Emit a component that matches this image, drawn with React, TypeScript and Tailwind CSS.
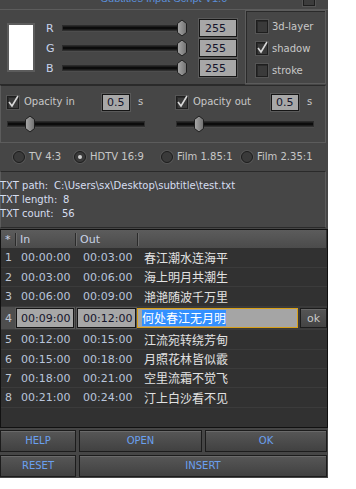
import React from "react";

const Knob = ({ left }: { left: number }) => (
  <svg
    width="10"
    height="17"
    viewBox="0 0 10 17"
    className="absolute top-1/2 -translate-y-1/2 -translate-x-1/2"
    style={{ left }}
  >
    <defs>
      <linearGradient id="kg" x1="0" x2="1" y1="0" y2="0">
        <stop offset="0" stopColor="#a8a8a8" />
        <stop offset="1" stopColor="#707070" />
      </linearGradient>
    </defs>
    <polygon points="5,0.5 9.5,4 9.5,13 5,16.5 0.5,13 0.5,4" fill="url(#kg)" stroke="#1e1e1e" strokeWidth="1" />
  </svg>
);

const Slider = ({ width, frac, cls }: { width: number; frac: number; cls: string }) => (
  <div className={`relative h-[17px] ${cls}`}>
    <div className="absolute left-0 right-0 top-1/2 -translate-y-1/2 h-[5px] bg-[#0c0c0c] border border-[#2e2e2e] shadow-[0_1px_0_#555]" />
    <Knob left={4 + frac * (width - 8)} />
  </div>
);

const Check = ({ on }: { on?: boolean }) => (
  <div className="w-[12px] h-[13px] shrink-0 bg-[#3a3a3a] border border-[#1e1e1e] shadow-[inset_1px_1px_0_#2a2a2a,0_0_0_1px_#555] relative">
    {on && (
      <svg width="12" height="13" viewBox="0 0 12 13" className="absolute -left-[1px] -top-[2px]">
        <path d="M2 7 L5 11 L11 1" fill="none" stroke="#d8d8d8" strokeWidth="1.6" />
      </svg>
    )}
  </div>
);

const Radio = ({ on }: { on?: boolean }) => (
  <div className="w-[12px] h-[12px] shrink-0 rounded-full bg-[#3a3a3a] border border-[#1c1c1c] shadow-[0_0_0_1px_#555] flex items-center justify-center">
    {on && <div className="w-[4px] h-[4px] rounded-full bg-[#cfcfcf]" />}
  </div>
);

const NumBox = ({ v, cls }: { v: string; cls: string }) => (
  <div className={`bg-[#a7a7a7] border border-[#151515] shadow-[0_0_0_1px_#5a5a5a] text-[#14142a] flex items-center ${cls}`}>
    {v}
  </div>
);

const rows: [string, string, string, string, number][] = [
  ["1", "00:00:00", "00:03:00", "春江潮水连海平", 20],
  ["2", "00:03:00", "00:06:00", "海上明月共潮生", 19],
  ["3", "00:06:00", "00:09:00", "滟滟随波千万里", 20],
  ["4", "00:09:00", "00:12:00", "何处春江无月明", 23],
  ["5", "00:12:00", "00:15:00", "江流宛转绕芳甸", 20],
  ["6", "00:15:00", "00:18:00", "月照花林皆似霰", 19],
  ["7", "00:18:00", "00:21:00", "空里流霜不觉飞", 19],
  ["8", "00:21:00", "00:24:00", "汀上白沙看不见", 20],
];

const Btn = ({ label, cls }: { label: string; cls: string }) => (
  <div
    className={`h-[22px] flex items-center justify-center bg-gradient-to-b from-[#575757] to-[#414141] border border-[#1c1c1c] shadow-[inset_0_1px_0_#6a6a6a] text-[#6aa0f0] text-[10px] ${cls}`}
  >
    {label}
  </div>
);

const Sep = () => (
  <div className="w-[2px] h-[13px] border-l border-[#2a2a2a] border-r border-r-[#6a6a6a] shrink-0" />
);

export default function App() {
  return (
    <div className="w-[328px] h-[478px] bg-[#464646] font-['DejaVu_Sans',sans-serif] text-[10px] leading-none text-[#cdd2dc] flex flex-col overflow-hidden select-none">
      {/* title */}
      <div className="h-[10px] shrink-0 border-b border-[#5c5c5c] overflow-hidden flex justify-center relative">
        <div className="mt-[-9px] leading-[14px] text-[11px] text-[#5b8ed8] font-['Liberation_Sans',sans-serif]">
          Subtitles Input Script V1.0
        </div>
        <div className="absolute left-[303px] top-[-6px] w-[12px] h-[12px] border border-[#1e1e1e] bg-[#3c3c3c] shadow-[0_0_0_1px_#555]" />
      </div>

      {/* colour section */}
      <div className="h-[75px] shrink-0 flex">
        <div className="w-[245px] flex items-start pl-[7px] border-b border-[#2a2a2a] shadow-[0_1px_0_#555]">
          <div className="w-[28px] h-[49px] mt-[13px] border-2 border-[#5c5c5c] bg-white shrink-0" />
          <div className="flex flex-col mt-[8px]">
            {["R", "G", "B"].map((c) => (
              <div key={c} className="h-[20px] flex items-center">
                <div className="w-[16px] ml-[11px] text-[11px] text-[#c8d4ec]">{c}</div>
                <Slider width={124} frac={1} cls="w-[124px]" />
                <NumBox v="255" cls="ml-[13px] w-[38px] h-[18px] pl-[5px] text-[11px]" />
              </div>
            ))}
          </div>
        </div>
        <div className="w-[81px] mb-[1px] border border-[#5c5c5c] shadow-[inset_1px_1px_0_#2a2a2a] flex flex-col pl-[10px] pt-[9px] gap-[9px]">
          {[
            ["3d-layer", false],
            ["shadow", true],
            ["stroke", false],
          ].map(([l, on]) => (
            <div key={l as string} className="h-[13px] flex items-center gap-[4px] text-[#c8c8c8]">
              <Check on={on as boolean} />
              <span>{l as string}</span>
            </div>
          ))}
        </div>
      </div>

      {/* opacity section */}
      <div className="h-[58px] shrink-0 w-[326px] border border-[#5c5c5c] border-t-[#2a2a2a] flex">
        {[
          ["Opacity in"],
          ["Opacity out"],
        ].map(([l], i) => (
          <div key={l} className={`flex flex-col px-[6px] ${i === 0 ? "w-[169px]" : "w-[155px]"}`}>
            <div className="h-[18px] mt-[7px] flex items-center">
              <Check on />
              <span className="ml-[5px] w-[78px] text-[#c8c8c8]">{l}</span>
              <NumBox v="0.5" cls="w-[28px] h-[17px] pl-[4px] text-[11px]" />
              <span className="ml-[8px] text-[#c8c8c8]">s</span>
            </div>
            <Slider width={138} frac={19 / 130} cls="w-[138px] mt-[4px]" />
          </div>
        ))}
      </div>

      {/* radios */}
      <div className="h-[28px] shrink-0 flex items-center pl-[13px] text-[#c8c8c8]">
        {[
          ["TV 4:3", false, "w-[61px]"],
          ["HDTV 16:9", true, "w-[87px]"],
          ["Film 1.85:1", false, "w-[80px]"],
          ["Film 2.35:1", false, ""],
        ].map(([l, on, w]) => (
          <div key={l as string} className={`flex items-center gap-[4px] ${w}`}>
            <Radio on={on as boolean} />
            <span>{l as string}</span>
          </div>
        ))}
      </div>

      {/* info */}
      <div className="h-[57px] shrink-0 w-[326px] border border-[#5c5c5c] border-t-[#2a2a2a] border-b-[#2a2a2a] flex flex-col pt-[9px] gap-[4px] text-[#d6def0]">
        <div className="h-[10px] -ml-[1px] flex">
          <span className="w-[54px]">TXT path:</span>
          <span>C:\Users\sx\Desktop\subtitle\test.txt</span>
        </div>
        <div className="h-[10px] -ml-[1px] flex">
          <span className="w-[63px]">TXT length:</span>
          <span>8</span>
        </div>
        <div className="h-[10px] -ml-[1px] flex">
          <span className="w-[62px]">TXT count:</span>
          <span>56</span>
        </div>
      </div>

      {/* table */}
      <div className="mt-[1px] h-[199px] shrink-0 w-[328px] border border-[#111] bg-[#313131] flex flex-col">
        <div className="h-[18px] shrink-0 w-[325px] bg-gradient-to-b from-[#5c5c5c] to-[#4b4b4b] flex items-center text-[#c8d2e4] text-[11px]">
          <span className="w-[14px] pl-[4px]">*</span>
          <Sep />
          <span className="w-[58px] pl-[3px]">In</span>
          <Sep />
          <span className="w-[60px] pl-[3px]">Out</span>
          <Sep />
        </div>
        {rows.map(([n, a, b, t, h]) =>
          n === "4" ? (
            <div key={n} className="h-[23px] shrink-0 w-[326px] flex items-center border-b border-[#3c3c3c] bg-[#3a3a3a]">
              <div className="w-[14px] h-full flex items-center pl-[4px] bg-[#4e4e4e] text-[11px] text-[#bfc6d4]">4</div>
              <NumBox v={a} cls="ml-[1px] w-[58px] h-[20px] pl-[4px] text-[11px]" />
              <NumBox v={b} cls="ml-[3px] w-[59px] h-[20px] pl-[5px] text-[11px]" />
              <div className="ml-[1px] w-[161px] h-[20px] bg-[#a5a5a5] border border-[#d8a018] flex items-center pl-[4px]">
                <span className="bg-[#3390ff] text-white text-[12px] leading-[16px] font-['Noto_Sans_CJK_SC',sans-serif]">{t}</span>
              </div>
              <div className="ml-[2px] w-[27px] h-[20px] bg-gradient-to-b from-[#555] to-[#444] border border-[#1c1c1c] shadow-[inset_0_1px_0_#666] flex items-center justify-center text-[11px] text-[#c8c8c8]">
                ok
              </div>
            </div>
          ) : (
            <div
              key={n}
              className="shrink-0 w-[326px] flex items-center border-b border-[#3b3b3b]"
              style={{ height: h }}
            >
              <span className="w-[15px] pl-[4px] text-[11px] text-[#bfc6d4]">{n}</span>
              <span className="w-[62px] pl-[5px] text-[11px] text-[#b9c5dc]">{a}</span>
              <span className="w-[61px] pl-[5px] text-[11px] text-[#b9c5dc]">{b}</span>
              <span className="pl-[5px] text-[12px] text-[#e2e2e2] font-['Noto_Sans_CJK_SC',sans-serif]">{t}</span>
            </div>
          )
        )}
      </div>

      {/* buttons */}
      <div className="mt-[2px] flex flex-col gap-[3px] w-[327px]">
        <div className="flex gap-[3px]">
          <Btn label="HELP" cls="w-[76px]" />
          <Btn label="OPEN" cls="w-[123px]" />
          <Btn label="OK" cls="w-[122px]" />
        </div>
        <div className="flex gap-[3px]">
          <Btn label="RESET" cls="w-[76px]" />
          <Btn label="INSERT" cls="w-[248px]" />
        </div>
      </div>
    </div>
  );
}
